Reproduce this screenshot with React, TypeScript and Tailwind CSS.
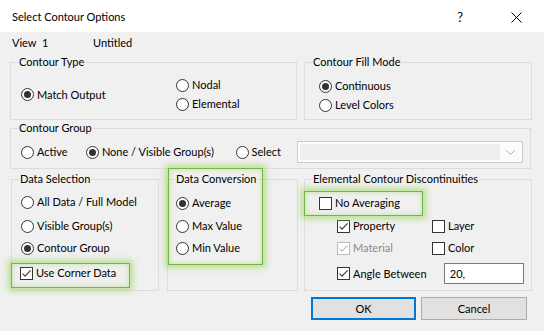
import React from 'react';

type RadioProps = { checked?: boolean; label: string; className?: string };

const Radio = ({ checked, label, className = '' }: RadioProps) => (
  <label className={`flex items-center h-[16px] whitespace-nowrap ${className}`}>
    <span className="w-[13px] h-[13px] rounded-full border border-[#333333] bg-white flex items-center justify-center shrink-0">
      {checked && <span className="w-[7px] h-[7px] rounded-full bg-[#333333]" />}
    </span>
    <span className="ml-[3px]">{label}</span>
  </label>
);

type CheckProps = { checked?: boolean; disabled?: boolean; label: string; className?: string };

const Check = ({ checked, disabled, label, className = '' }: CheckProps) => (
  <label className={`flex items-center h-[16px] whitespace-nowrap ${className}`}>
    <span className={`w-[13px] h-[13px] border bg-white shrink-0 flex items-center justify-center ${disabled ? 'border-[#bcbcbc]' : 'border-[#333333]'}`}>
      {checked && (
        <svg width="11" height="11" viewBox="0 0 11 11">
          <path d="M1.5 5.5 L4 8.2 L9.6 2.4" fill="none" stroke={disabled ? '#bcbcbc' : '#333333'} strokeWidth="1.1" />
        </svg>
      )}
    </span>
    <span className={`ml-[3px] ${disabled ? 'text-[#8a8a8a]' : ''}`}>{label}</span>
  </label>
);

const Group = ({ title, className = '', children }: { title: string; className?: string; children?: React.ReactNode }) => (
  <fieldset className={`border border-[#dcdcdc] px-[7px] min-w-0 ${className}`}>
    <legend className="px-[1px] leading-[16px]">{title}</legend>
    {children}
  </fieldset>
);

const Highlight = ({ className = '' }: { className?: string }) => (
  <div className={`absolute border border-[#74b545] pointer-events-none shadow-[0_0_6px_3px_rgba(160,215,100,0.65),inset_0_0_4px_1px_rgba(170,220,120,0.5)] ${className}`} />
);

export default function App() {
  return (
    <div className="w-[544px] h-[331px] flex flex-col bg-white text-[11px] leading-[16px] text-black [font-family:Lato,sans-serif] overflow-hidden">
      {/* title bar */}
      <div className="h-[32px] shrink-0 flex items-center pl-[12px] pt-[2px]">
        <span>Select Contour Options</span>
        <span className="ml-auto text-[13px]">?</span>
        <svg className="ml-[48px] mr-[22px]" width="11" height="11" viewBox="0 0 11 11">
          <path d="M0.5 0.5 L10.5 10.5 M10.5 0.5 L0.5 10.5" stroke="#000" strokeWidth="1" />
        </svg>
      </div>

      <div className="flex-1 bg-[#f0f0f0] pl-[10px] pr-[12px] pt-[3px]">
        <div className="flex h-[16px]">
          <span className="ml-[2px] w-[30px]">View</span>
          <span className="w-[51px]">1</span>
          <span>Untitled</span>
        </div>

        {/* contour type / fill mode */}
        <div className="flex mt-[3px] gap-[7px]">
          <Group title="Contour Type" className="w-[287px] h-[66px]">
            <div className="flex items-center h-[49px]">
              <Radio checked label="Match Output" className="ml-[3px] w-[155px]" />
              <div className="flex flex-col gap-[3px]">
                <Radio label="Nodal" />
                <Radio label="Elemental" />
              </div>
            </div>
          </Group>
          <Group title="Contour Fill Mode" className="w-[228px] h-[66px]">
            <div className="flex flex-col gap-[3px] pt-[8px] ml-[7px]">
              <Radio checked label="Continuous" />
              <Radio label="Level Colors" />
            </div>
          </Group>
        </div>

        {/* contour group */}
        <Group title="Contour Group" className="w-[521px] h-[49px]">
          <div className="flex items-center h-[32px]">
            <Radio label="Active" className="ml-[3px] w-[65px]" />
            <Radio checked label="None / Visible Group(s)" className="w-[150px]" />
            <Radio label="Select" className="w-[62px]" />
            <div className="w-[226px] h-[22px] border border-[#cccccc] bg-[#fbfbfb] flex p-[2px]">
              <div className="flex-1 bg-[#efefef]" />
              <div className="w-[20px] flex items-center justify-center">
                <svg width="9" height="5" viewBox="0 0 9 5">
                  <path d="M0.5 0.5 L4.5 4.5 L8.5 0.5" fill="none" stroke="#a8a8a8" strokeWidth="1" />
                </svg>
              </div>
            </div>
          </div>
        </Group>

        {/* data selection / conversion / discontinuities */}
        <div className="relative flex mt-[2px]">
          <Group title="Data Selection" className="ml-[1px] w-[148px] h-[120px]">
            <div className="flex flex-col">
              <Radio label="All Data / Full Model" className="ml-[2px] mt-[7px]" />
              <Radio label="Visible Group(s)" className="ml-[2px] mt-[8px]" />
              <Radio checked label="Contour Group" className="ml-[2px] mt-[6px]" />
              <Check checked label="Use Corner Data" className="ml-[1px] mt-[9px]" />
            </div>
          </Group>
          <Group title="Data Conversion" className="ml-[8px] w-[131px] h-[120px]">
            <div className="flex flex-col">
              <Radio checked label="Average" className="ml-[1px] mt-[8px]" />
              <Radio label="Max Value" className="ml-[1px] mt-[7px]" />
              <Radio label="Min Value" className="ml-[1px] mt-[6px]" />
            </div>
          </Group>
          <Group title="Elemental Contour Discontinuities" className="ml-[6px] w-[228px] h-[120px]">
            <div className="flex flex-col">
              <Check label="No Averaging" className="ml-[7px] mt-[8px]" />
              <div className="flex mt-[7px] ml-[25px]">
                <Check checked label="Property" className="w-[95px]" />
                <Check label="Layer" />
              </div>
              <div className="flex mt-[6px] ml-[25px]">
                <Check checked disabled label="Material" className="w-[95px]" />
                <Check label="Color" />
              </div>
              <div className="flex items-center mt-[7px] ml-[25px] h-[21px]">
                <Check checked label="Angle Between" className="w-[108px]" />
                <div className="w-[81px] h-[21px] border border-[#7a7a7a] bg-white pl-[5px] flex items-center">20,</div>
              </div>
            </div>
          </Group>

          <Highlight className="left-[1px] top-[92px] w-[119px] h-[25px]" />
          <Highlight className="left-[158px] top-[-3px] w-[95px] h-[97px]" />
          <Highlight className="left-[294px] top-[20px] w-[119px] h-[25px]" />
        </div>

        {/* buttons */}
        <div className="flex justify-end mt-[6px] mr-[5px]">
          <button className="w-[105px] h-[23px] bg-[#e1e1e1] border-2 border-[#0078d7]">OK</button>
          <button className="ml-[5px] w-[106px] h-[23px] bg-[#e1e1e1] border border-[#adadad]">Cancel</button>
        </div>
      </div>
    </div>
  );
}
